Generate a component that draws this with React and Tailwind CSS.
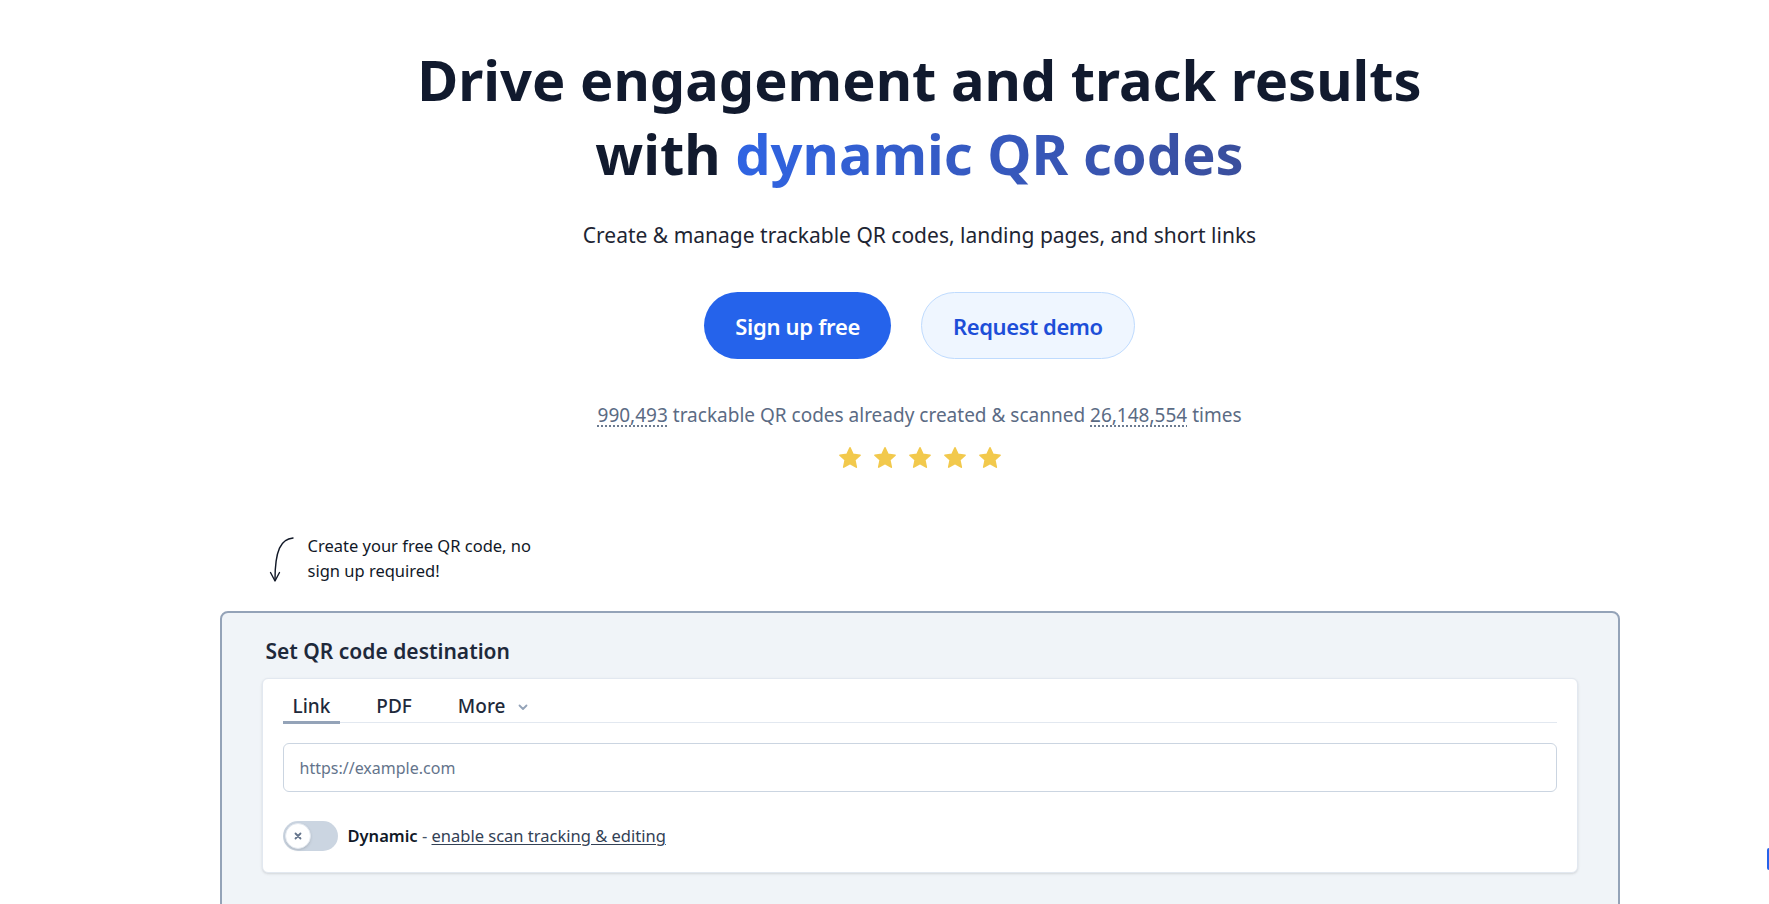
import React from 'react';

function Star() {
  return (
    <svg width="24" height="24" viewBox="0 0 24 24" className="block">
      <path
        d="M12 1.8l3 6.6 7.1.8-5.3 4.8 1.5 7.1L12 17.5l-6.3 3.6 1.5-7.1L1.9 9.2 9 8.4z"
        fill="#f2c94c"
        stroke="#f2c94c"
        strokeWidth="1.6"
        strokeLinejoin="round"
      />
    </svg>
  );
}

function CurlyArrow() {
  return (
    <svg width="30" height="52" viewBox="0 0 30 52" fill="none" className="shrink-0">
      <path d="M27 5 C15 6, 9 17, 9 47" stroke="#111827" strokeWidth="1.4" strokeLinecap="round" />
      <path d="M4.5 39.5 L9 48 L13.5 39.5" stroke="#111827" strokeWidth="1.4" strokeLinecap="round" strokeLinejoin="round" />
    </svg>
  );
}

export default function App() {
  const font = { fontFamily: '"Noto Sans", "Open Sans", sans-serif' };

  return (
    <div className="min-h-screen bg-white overflow-hidden relative" style={font}>
      <div className="pl-[70px]">
        {/* Hero */}
        <div className="flex flex-col items-center pt-[42px] text-center">
          <h1 className="text-[56px] leading-[74px] font-bold text-[#111a2e]">
            Drive engagement and track results
            <br />
            with{' '}
            <span className="bg-linear-to-r from-[#2f64e3] to-[#3a4e9c] bg-clip-text text-transparent">
              dynamic QR codes
            </span>
          </h1>

          <p className="mt-[31px] text-[21px] leading-7 text-[#1e2533]">
            Create &amp; manage trackable QR codes, landing pages, and short links
          </p>

          <div className="mt-[43px] flex items-center gap-[30px]">
            <button className="h-[67px] px-[31px] rounded-full bg-[#2563eb] text-white text-[22px] tracking-[-0.3px] font-semibold leading-8">
              Sign up free
            </button>
            <button className="h-[67px] px-[31px] rounded-full bg-[#eff6ff] border border-[#bfdbfe] text-[#1d4ed8] text-[22px] tracking-[-0.4px] font-semibold leading-8">
              Request demo
            </button>
          </div>

          <p className="mt-[42px] text-[19px] leading-7 text-[#5b6b84]">
            <span className="underline decoration-dotted decoration-[#64748b] underline-offset-4">990,493</span>
            {' '}trackable QR codes already created &amp; scanned{' '}
            <span className="underline decoration-dotted decoration-[#64748b] underline-offset-4">26,148,554</span>
            {' '}times
          </p>

          <div className="mt-[17px] flex items-center gap-[11px]">
            <Star />
            <Star />
            <Star />
            <Star />
            <Star />
          </div>
        </div>

        {/* Generator */}
        <div className="w-[1400px] mx-auto mt-[63px]">
          <div className="flex items-start gap-[12px] pl-[46px]">
            <CurlyArrow />
            <p className="text-[16.5px] leading-[25px] text-[#111827]">
              Create your free QR code, no
              <br />
              sign up required!
            </p>
          </div>

          <div className="mt-[26px] border-2 border-[#94a3b8] rounded-lg bg-[#f0f4f8] px-10 pt-[24px] pb-10 h-[320px]">
            <h2 className="ml-1 text-[21px] leading-7 font-semibold text-[#1e293b]">Set QR code destination</h2>

            <div className="mt-[13px] bg-white border border-[#e2e8f0] rounded-md shadow-sm px-5 pt-[13px] pb-[21px]">
              <div className="flex items-end gap-[26px] border-b border-[#e2e8f0]">
                <button className="px-[10px] text-[19px] leading-[29px] font-medium text-[#1e293b] border-b-[3px] border-[#94a3b8] -mb-[2px]">
                  Link
                </button>
                <button className="px-[10px] text-[19px] leading-[29px] font-medium text-[#1e293b] border-b-[3px] border-transparent -mb-[2px]">
                  PDF
                </button>
                <button className="px-[10px] flex items-center gap-[12px] text-[19px] leading-[29px] font-medium text-[#1e293b] border-b-[3px] border-transparent -mb-[2px]">
                  More
                  <svg width="12" height="12" viewBox="0 0 12 12" fill="none">
                    <path d="M2.5 4.5 L6 8 L9.5 4.5" stroke="#94a3b8" strokeWidth="1.8" strokeLinecap="round" strokeLinejoin="round" />
                  </svg>
                </button>
              </div>

              <input
                type="text"
                placeholder="https://example.com"
                className="mt-5 w-full h-[49px] px-4 border border-[#cbd5e1] rounded-md text-[16px] text-[#1e293b] placeholder:text-[#64748b] outline-none bg-white"
              />

              <div className="mt-[29px] flex items-center gap-[10px]">
                <div className="w-[55px] h-[30px] rounded-full bg-[#cbd5e1] p-[2px] flex items-center">
                  <div className="w-[26px] h-[26px] rounded-full bg-white shadow-sm border border-[#e2e8f0] flex items-center justify-center">
                    <svg width="10" height="10" viewBox="0 0 10 10" fill="none">
                      <path d="M2.5 2.5 L7.5 7.5 M7.5 2.5 L2.5 7.5" stroke="#64748b" strokeWidth="1.8" strokeLinecap="round" />
                    </svg>
                  </div>
                </div>
                <p className="text-[16.5px] leading-6 text-[#475569]">
                  <span className="font-semibold text-[#111827]">Dynamic</span>
                  {' - '}
                  <a href="#" className="underline underline-offset-2 text-[#334155]">enable scan tracking &amp; editing</a>
                </p>
              </div>
            </div>
          </div>
        </div>
      </div>

      {/* chat widget peeking in from the right edge */}
      <div className="absolute right-0 top-[848px] w-[2px] h-[22px] bg-[#2563eb] rounded-l-sm" />
    </div>
  );
}
